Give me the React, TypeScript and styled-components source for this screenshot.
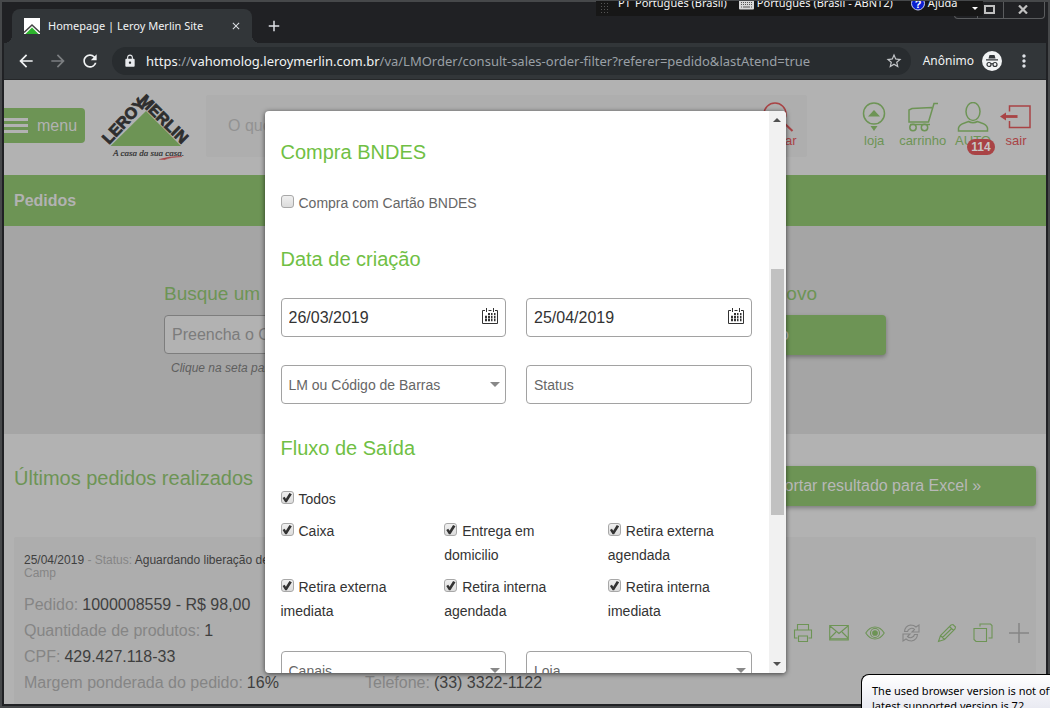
import React from "react";
import styled, { createGlobalStyle, css } from "styled-components";
import {
  MdArrowBack,
  MdArrowForward,
  MdRefresh,
  MdLock,
  MdStarBorder,
  MdMoreVert,
  MdClose,
  MdAdd,
} from "react-icons/md";

const green = "#6d9455";
const brightGreen = "#70bf44";
const red = "#a94345";
const pale = "#b2b2b2";
const ui = `"Noto Sans", "Open Sans", sans-serif`;
const sans = `"Liberation Sans", Arial, sans-serif`;

const GlobalStyle = createGlobalStyle`
  *, *::before, *::after { box-sizing: border-box; }
  html, body, #root { height: 100%; }
  body { margin: 0; overflow: hidden; font-family: ${sans}; }
  button, input, select { font: inherit; margin: 0; }
  button { border: 0; padding: 0; background: none; color: inherit; }
  h1, h2, h3, p, ul, dl, dd { margin: 0; padding: 0; font-weight: 400; }
`;

/* ---------- Browser window ---------- */

const Desktop = styled.div`
  position: relative;
  height: 100vh;
  overflow: hidden;
`;

const Window = styled.div`
  display: flex;
  flex-direction: column;
  height: 100%;
  overflow: hidden;
  background: #202124;
  border: 2px solid #46484a;
  padding: 0 2px 2px;
`;

const TabStrip = styled.div`
  display: flex;
  align-items: flex-end;
  height: 41px;
  padding-left: 8px;
  flex: none;
`;

const Tab = styled.div`
  position: relative;
  display: flex;
  align-items: center;
  gap: 8px;
  width: 240px;
  height: 34px;
  padding: 0 10px 0 12px;
  border-radius: 8px 8px 0 0;
  background: #323639;
  color: #f1f3f4;
  font: 11px/16px ${ui};
  &::before,
  &::after {
    content: "";
    position: absolute;
    bottom: 0;
    width: 8px;
    height: 8px;
  }
  &::before {
    right: 100%;
    background: radial-gradient(circle at 0 0, transparent 8px, #323639 8px);
  }
  &::after {
    left: 100%;
    background: radial-gradient(circle at 100% 0, transparent 8px, #323639 8px);
  }
`;

const TabTitle = styled.span`
  flex: 1;
  white-space: nowrap;
`;

const IconButton = styled.button<{ $color?: string }>`
  display: flex;
  align-items: center;
  justify-content: center;
  color: ${(p) => p.$color || "#dee1e6"};
`;

const NewTab = styled(IconButton)`
  width: 28px;
  height: 34px;
  margin-left: 8px;
`;

const WindowControls = styled.div`
  display: flex;
  align-self: flex-start;
  height: 17px;
  margin: 0 1px 0 auto;
  border: 1px solid #5a5c5e;
  border-top: 0;
  border-radius: 0 0 4px 4px;
`;

const Control = styled(IconButton)<{ $width: number }>`
  width: ${(p) => p.$width}px;
  padding: 0 2px 2px 0;
  color: #c0c0c0;
  & + & {
    border-left: 1px solid #5a5c5e;
  }
`;

const Toolbar = styled.div`
  display: flex;
  align-items: center;
  height: 37px;
  padding: 0 12px;
  flex: none;
  background: #323639;
  border-bottom: 1px solid #26282a;
`;

const NavButtons = styled.div`
  display: flex;
  gap: 12px;
  margin-right: 12px;
`;

const Omnibox = styled.div`
  display: flex;
  align-items: center;
  flex: 1;
  height: 28px;
  padding: 0 8px 0 11px;
  border-radius: 14px;
  background: #282c2f;
  color: #e8eaed;
`;

const Url = styled.span`
  flex: 1;
  margin-left: 9px;
  overflow: hidden;
  white-space: nowrap;
  color: #9aa0a6;
  font: 13px/20px ${ui};
  b {
    color: #f1f3f4;
    font-weight: 400;
  }
`;

const Profile = styled.div`
  display: flex;
  align-items: center;
  gap: 8px;
  margin: 0 12px;
  color: #f1f3f4;
  font: 12px/16px ${ui};
`;

const LanguageBar = styled.div`
  position: absolute;
  top: 1px;
  right: 67px;
  display: flex;
  align-items: flex-start;
  width: 387px;
  height: 15px;
  padding: 0 3px 0 22px;
  overflow: hidden;
  background: #171717;
  color: #f4f4f4;
  font: 11px/16px ${ui};
  white-space: nowrap;
`;

const BarLabel = styled.span<{ $width: number }>`
  width: ${(p) => p.$width}px;
  flex: none;
  margin-top: -6px;
`;

const Grip = styled.span`
  position: absolute;
  left: 4px;
  top: 1px;
  width: 8px;
  height: 11px;
  background: radial-gradient(#555 1px, transparent 1px) 0 0 / 3px 3px;
`;

const BrowserNotice = styled.div`
  position: absolute;
  right: 0;
  bottom: 0;
  width: 189px;
  height: 34px;
  padding: 8px 0 0 10px;
  overflow: hidden;
  border: 1px solid #000;
  border-width: 1px 0 0 1px;
  border-radius: 8px 0 0 0;
  background: linear-gradient(#fff, #e9eaf2);
  color: #000;
  font: 11px/15px ${ui};
  white-space: nowrap;
`;

/* ---------- Page ---------- */

const Viewport = styled.div`
  position: relative;
  flex: 1;
  min-height: 0;
  overflow: hidden;
  background: ${pale};
`;

const Header = styled.header`
  display: flex;
  align-items: center;
  height: 95px;
  padding: 0 14px 4px 0;
`;

const MenuButton = styled.button`
  display: flex;
  align-items: center;
  gap: 9px;
  width: 81px;
  height: 35px;
  border-radius: 0 4px 4px 0;
  background: ${green};
  color: ${pale};
  font-size: 16px;
  line-height: 24px;
`;

const Burger = styled.span`
  width: 24px;
  height: 15px;
  border: solid ${pale};
  border-width: 3px 0;
  background: linear-gradient(${pale}, ${pale}) center / 24px 3px no-repeat;
`;

const LogoLink = styled.a`
  display: block;
  width: 92px;
  height: 72px;
  margin: 0 14px 0 15px;
`;

const SearchForm = styled.form`
  display: flex;
  flex: 1;
  height: 62px;
  border-radius: 2px;
  background: #aeaeae;
`;

const SearchInput = styled.input`
  flex: 1;
  min-width: 0;
  border: 0;
  padding: 0 22px;
  background: none;
  font-size: 16px;
  &::placeholder {
    color: #929292;
    opacity: 1;
  }
`;

const NavItem = styled.button<{ $color: string }>`
  position: relative;
  display: flex;
  flex-direction: column;
  align-items: center;
  min-width: 32px;
  color: ${(p) => p.$color};
  font-size: 13px;
  line-height: 16px;
`;

const SearchButton = styled(NavItem)`
  width: 60px;
  padding-top: 7px;
`;

const HeaderNav = styled.nav`
  display: flex;
  gap: 9px;
  margin-left: 51px;
`;

const Badge = styled.span`
  position: absolute;
  right: -4px;
  bottom: -6px;
  width: 28px;
  border-radius: 8px;
  background: ${red};
  color: #c6c6c6;
  font-size: 12px;
  font-weight: 700;
  text-align: center;
`;

const TitleBar = styled.div`
  display: flex;
  align-items: center;
  height: 51px;
  padding: 0 10px;
  background: ${green};
`;

const PageTitle = styled.h1`
  color: ${pale};
  font-size: 16px;
  font-weight: 700;
  line-height: 24px;
`;

const Finder = styled.section`
  display: flex;
  justify-content: center;
  gap: 40px;
  height: 208px;
  padding-top: 56px;
  background: #a5a5a5;
`;

const FinderColumn = styled.div<{ $end?: boolean }>`
  width: 341px;
  ${(p) =>
    p.$end &&
    css`
      h2 {
        padding-right: 69px;
        text-align: right;
      }
    `}
`;

const FinderTitle = styled.h2`
  margin-bottom: 9px;
  color: ${green};
  font-size: 19px;
  line-height: 24px;
`;

const FinderInput = styled.input`
  width: 100%;
  height: 39px;
  padding: 0 7px;
  border: 1px solid #7d7d7d;
  border-radius: 4px;
  background: ${pale};
  font-size: 16px;
  &::placeholder {
    color: #7c7c7c;
    opacity: 1;
  }
`;

const Hint = styled.p`
  margin-top: 6px;
  padding-left: 7px;
  color: #5f5f5f;
  font-size: 12px;
  font-style: italic;
  line-height: 16px;
`;

const GreenButton = styled.button<{ $wide?: boolean }>`
  height: 40px;
  border-radius: 4px;
  background: ${green};
  box-shadow: 0 2px 4px rgba(0, 0, 0, 0.3);
  color: #b8b8b8;
  font-size: 16px;
  width: ${(p) => (p.$wide ? "334px" : "100%")};
  text-align: center;
  ${(p) =>
    !p.$wide &&
    css`
      padding-right: 97px;
      text-align: right;
    `}
`;

const Orders = styled.section`
  padding: 32px 10px 0;
`;

const OrdersHead = styled.div`
  display: flex;
  align-items: flex-start;
  justify-content: space-between;
  height: 71px;
`;

const OrdersTitle = styled.h2`
  color: ${green};
  font-size: 20px;
  line-height: 24px;
`;

const OrderCard = styled.article`
  height: 240px;
  padding: 17px 10px 0;
  border-radius: 2px;
  background: #adadad;
  color: #858585;
  b {
    color: #3f3f3f;
    font-weight: 400;
  }
`;

const OrderStatus = styled.p`
  height: 38px;
  font-size: 12px;
  line-height: 13px;
  span {
    display: block;
  }
`;

const OrderColumns = styled.div`
  display: flex;
  align-items: flex-start;
`;

const Details = styled.dl<{ $last?: boolean }>`
  width: 341px;
  font-size: 16px;
  line-height: 26px;
  ${(p) => p.$last && "align-self: flex-end;"}
  div {
    display: flex;
    gap: 4px;
  }
  dd {
    color: #3f3f3f;
  }
`;

const Actions = styled.div`
  display: flex;
  gap: 16px;
  margin: 31px -3px 0 auto;
`;

/* ---------- Dialog ---------- */

const Overlay = styled.div`
  position: absolute;
  inset: 0;
  display: flex;
  align-items: center;
  justify-content: center;
`;

const Dialog = styled.div`
  display: flex;
  width: 50%;
  height: 90%;
  overflow: hidden;
  border-radius: 4px;
  background: #fff;
  box-shadow: 0 1px 5px rgba(0, 0, 0, 0.65);
`;

const DialogBody = styled.form`
  flex: 1;
  min-width: 0;
  overflow: hidden;
  padding: 29px 17px 0 16px;
`;

const Group = styled.section`
  display: flex;
  flex-direction: column;
  margin-bottom: 32px;
`;

const GroupTitle = styled.h2`
  margin-bottom: 27px;
  color: ${brightGreen};
  font-size: 20px;
  line-height: 24px;
`;

const FieldGrid = styled.div`
  display: grid;
  grid-template-columns: 1fr 1fr;
  gap: 28px 20px;
`;

const Field = styled.div`
  display: flex;
  align-items: center;
  min-width: 0;
  height: 39px;
  border: 1px solid #a2a2a2;
  border-radius: 4px;
  background: #fff;
  color: #333;
  svg {
    flex: none;
  }
`;

const FieldInput = styled.input`
  flex: 1;
  min-width: 0;
  height: 37px;
  padding: 0 7px;
  border: 0;
  background: none;
  color: #333;
  font-size: 16px;
  &::placeholder {
    color: #666;
    font-size: 14px;
    opacity: 1;
  }
`;

const CalendarButton = styled(IconButton)`
  width: 18px;
  height: 37px;
  padding-bottom: 3px;
  margin-right: 6px;
  color: #333;
`;

const FieldSelect = styled.select`
  flex: 1;
  min-width: 0;
  height: 37px;
  padding: 0 7px;
  border: 0;
  appearance: none;
  background: none;
  color: #666;
  font-size: 14px;
`;

const Caret = styled.span`
  width: 0;
  margin-right: 5px;
  border: 5px solid transparent;
  border-top-color: #888;
  border-bottom: 0;
`;

const CheckGrid = styled.div`
  display: grid;
  grid-template-columns: repeat(3, 1fr);
  gap: 8px 20px;
  margin: 8px 0 28px;
`;

const CheckLabel = styled.label<{ $muted?: boolean }>`
  color: ${(p) => (p.$muted ? "#666" : "#333")};
  font-size: 14px;
  line-height: 24px;
`;

const CheckBox = styled.input`
  display: inline-block;
  width: 13px;
  height: 13px;
  && {
    margin-right: 5px;
  }
  border: 1px solid #a8a8a8;
  border-radius: 3px;
  appearance: none;
  vertical-align: baseline;
  background: linear-gradient(#f0f0f0, #dcdcdc);
  &:checked::before {
    content: "";
    display: block;
    width: 11px;
    height: 11px;
    background: #333;
    clip-path: polygon(10% 52%, 28% 42%, 40% 60%, 72% 8%, 94% 18%, 48% 92%, 34% 92%);
  }
`;

const Scrollbar = styled.div`
  display: grid;
  grid-template-rows: 17px 141fr 246fr 141fr 17px;
  width: 17px;
  background: #f1f1f1;
`;

const Thumb = styled.div`
  grid-row: 3;
  margin: 0 2px;
  background: #c1c1c1;
`;

const ScrollArrow = styled(IconButton)<{ $down?: boolean }>`
  grid-row: ${(p) => (p.$down ? 5 : 1)};
  color: #505050;
`;

/* ---------- Drawings ---------- */

const Stroke = ({ w, h, children, sw = 1.5 }: { w: number; h: number; sw?: number; children: React.ReactNode }) => (
  <svg width={w} height={h} viewBox={`0 0 ${w} ${h}`} fill="none" stroke="currentColor" strokeWidth={sw}>
    {children}
  </svg>
);

const Favicon = () => (
  <svg width="16" height="16" viewBox="0 0 16 16">
    <rect width="16" height="16" fill="#fff" />
    <path d="M1.500 16 8 9.500l6.500 6.500z" fill="#2db42d" />
    <path d="M0 14.500 8 7l8 7.500" fill="none" stroke="#444" strokeWidth="1.500" />
  </svg>
);

const Logo = () => (
  <svg width="92" height="72" viewBox="0 0 92 72" overflow="visible">
    <path d="M46 21 81 56H10.500z" fill={green} />
    <g fill="#2e2e2e" stroke="#2e2e2e" strokeWidth="0.800" fontFamily="Liberation Sans" fontWeight="700" fontSize="16">
      <text transform="translate(9 55) rotate(-47)">LEROY</text>
      <text transform="translate(38 11.500) rotate(44.500)">MERLIN</text>
    </g>
    <text x="13" y="66" fill="#2e2e2e" stroke="#2e2e2e" strokeWidth="0.200" fontFamily="Liberation Serif" fontStyle="italic" fontSize="9">
      A casa da sua casa.
    </text>
    <path d="M59 69.500q10-3.500 23-3-12 .6-18 3.200" fill={red} stroke={red} strokeWidth=".5" />
  </svg>
);

const SearchIcon = () => (
  <Stroke w={40} h={31}>
    <circle cx="18" cy="12" r="11" />
    <path d="M26 20l9.500 9" strokeWidth="2" />
  </Stroke>
);

const StoreIcon = () => (
  <Stroke w={24} h={31}>
    <circle cx="12" cy="11.500" r="10.500" />
    <path d="M6 14.500l6-6.500 6 6.500z" fill="currentColor" stroke="none" />
    <path d="M8.500 24h7l-3.500 5z" fill="currentColor" stroke="none" />
  </Stroke>
);

const CartIcon = () => (
  <Stroke w={32} h={31}>
    <path d="M31 1.500h-4l-5.500 18.500H2V8l3-1.500 20-1" />
    <path d="M3 22.500h20" />
    <circle cx="6" cy="25.500" r="3.200" />
    <circle cx="17.500" cy="25.500" r="3.200" />
  </Stroke>
);

const UserIcon = () => (
  <Stroke w={32} h={31}>
    <ellipse cx="16" cy="9.500" rx="7" ry="9" />
    <path d="M1.500 29v-3q1-3.500 6-5l4-1.500q4.500 2.500 9 0l4 1.500q5 1.500 6 5v3z" />
  </Stroke>
);

const ExitIcon = () => (
  <Stroke w={32} h={31}>
    <path d="M9.500 9.500V4h20.500v21.500H9.500V19" />
    <path d="M4 14.500h13.500" strokeWidth="2.800" />
    <path d="M0 14.500l6-4v8z" fill="currentColor" stroke="none" />
  </Stroke>
);

const CalendarIcon = () => (
  <Stroke w={16} h={16} sw={1}>
    <path d="M3 2.500H.5v13h15v-13H13M6.500 2.500h3" />
    <path d="M4.500 0v4M11.500 0v4" />
    <path d="M6 6h2M9 6h1.500M12 6h1.500" strokeWidth="2" />
    <path d="M3 9h2M6 9h2M9 9h1.500M12 9h1.500M3 12h2M6 12h2M9 12h1.500M12 12h1.500" strokeWidth="2.400" />
  </Stroke>
);

const Triangle = ({ down }: { down?: boolean }) => (
  <svg width="8" height="4" viewBox="0 0 8 4" fill="currentColor">
    <path d={down ? "M0 0h8L4 4z" : "M0 4h8L4 0z"} />
  </svg>
);

const Incognito = () => (
  <svg width="20" height="20" viewBox="0 0 20 20">
    <circle cx="10" cy="10" r="10" fill="#f1f3f4" />
    <path d="M6.500 7.500 7.500 4h5l1 3.500zM4 8.200h12v1.300H4z" fill="#323639" />
    <g fill="none" stroke="#323639" strokeWidth="1.200">
      <circle cx="7" cy="13.500" r="2" />
      <circle cx="13" cy="13.500" r="2" />
      <path d="M9 13q1-.8 2 0" />
    </g>
  </svg>
);

const Keyboard = () => (
  <svg width="15" height="9" viewBox="0 1 15 9">
    <rect width="15" height="9" y="0.500" rx="1" fill="#d8d8d8" />
    <path d="M2 2.500h11M2 4.500h11" stroke="#555" strokeDasharray="1 1" />
    <path d="M2 7h1M4 7h7M12 7h1" stroke="#555" />
  </svg>
);

const HelpIcon = () => (
  <svg width="14" height="10" viewBox="0 4 14 10">
    <circle cx="7" cy="6.500" r="6.500" fill="#0a1fd0" stroke="#c8ccf0" />
    <text x="7" y="10.500" textAnchor="middle" fill="#fff" fontFamily="Liberation Sans" fontWeight="700" fontSize="11">
      ?
    </text>
  </svg>
);

const actionIcons: { label: string; color: string; icon: React.ReactNode }[] = [
  {
    label: "Imprimir",
    color: green,
    icon: <path d="M4.500 7V1.500h11V7M4.500 15h-3V7h17v8h-3M5.500 13h9v5.500h-9zM3 7h14" />,
  },
  {
    label: "Enviar e-mail",
    color: green,
    icon: <path d="M.7 2.500h18.600v14.500H.7zM.7 15.800h18.600M1 3l9 7.500L19 3M1 15l6-6M19 15l-6-6" />,
  },
  {
    label: "Visualizar",
    color: green,
    icon: (
      <>
        <path d="M.8 10q3.700-6 9.200-6t9.200 6q-3.700 6-9.200 6T.8 10z" />
        <circle cx="10" cy="10" r="4.500" />
        <circle cx="10" cy="10" r="2.300" fill="currentColor" />
      </>
    ),
  },
  {
    label: "Atualizar",
    color: "#858585",
    icon: (
      <>
        <path d="M3.500 8.500q.5-5.500 6-6.500 3.500 0 5.500 2L18 2v7h-7l2.500-2.500q-2-2-4.500-.8Q7 6.500 6.500 8.500z" />
        <path d="M16.500 11.500q-.5 5.500-6 6.500-3.500 0-5.500-2L2 18v-7h7l-2.500 2.500q2 2 4.500.8 2-.8 2.500-2.800z" />
      </>
    ),
  },
  {
    label: "Editar",
    color: green,
    icon: <path d="M1.500 18.500l2-6L14 2l2-.5 2.500 2.500-.5 2L7.500 16.500zM3.500 12.500l4 4M12.500 3.500l4 4M5.500 14.500l9.200-9" />,
  },
  {
    label: "Copiar",
    color: green,
    icon: <path d="M1 5.500h12.500V18.500H3l-2-2zM7 3.500V1h10.500l1.500 1.500V15h-3.500" />,
  },
];

/* ---------- Dialog content ---------- */

const DateField = ({ label, value }: { label: string; value: string }) => (
  <Field>
    <FieldInput type="text" aria-label={label} defaultValue={value} />
    <CalendarButton type="button" aria-label={`Abrir calendário: ${label}`}>
      <CalendarIcon />
    </CalendarButton>
  </Field>
);

const SelectField = ({ label }: { label: string }) => (
  <Field>
    <FieldSelect aria-label={label} defaultValue="">
      <option value="">{label}</option>
    </FieldSelect>
    <Caret />
  </Field>
);

const Check = ({ text, checked, muted }: { text: string; checked?: boolean; muted?: boolean }) => (
  <CheckLabel $muted={muted}>
    <CheckBox type="checkbox" defaultChecked={checked} />
    {text}
  </CheckLabel>
);

const exits = [
  "Caixa",
  "Entrega em domicilio",
  "Retira externa agendada",
  "Retira externa imediata",
  "Retira interna agendada",
  "Retira interna imediata",
];

const FilterDialog = () => (
  <Overlay>
    <Dialog role="dialog" aria-label="Filtro de pedidos">
      <DialogBody>
        <Group>
          <GroupTitle>Compra BNDES</GroupTitle>
          <Check text="Compra com Cartão BNDES" muted />
        </Group>
        <Group>
          <GroupTitle>Data de criação</GroupTitle>
          <FieldGrid>
            <DateField label="Data inicial" value="26/03/2019" />
            <DateField label="Data final" value="25/04/2019" />
            <SelectField label="LM ou Código de Barras" />
            <Field>
              <FieldInput type="text" aria-label="Status" placeholder="Status" />
            </Field>
          </FieldGrid>
        </Group>
        <Group>
          <GroupTitle>Fluxo de Saída</GroupTitle>
          <Check text="Todos" checked />
          <CheckGrid>
            {exits.map((text) => (
              <Check key={text} text={text} checked />
            ))}
          </CheckGrid>
          <FieldGrid>
            <SelectField label="Canais" />
            <SelectField label="Loja" />
          </FieldGrid>
        </Group>
      </DialogBody>
      <Scrollbar>
        <ScrollArrow type="button" aria-label="Rolar para cima">
          <Triangle />
        </ScrollArrow>
        <Thumb />
        <ScrollArrow type="button" aria-label="Rolar para baixo" $down>
          <Triangle down />
        </ScrollArrow>
      </Scrollbar>
    </Dialog>
  </Overlay>
);

/* ---------- Page content ---------- */

const orderDetails: [string, string][] = [
  ["Pedido:", "1000008559 - R$ 98,00"],
  ["Quantidade de produtos:", "1"],
  ["CPF:", "429.427.118-33"],
  ["Margem ponderada do pedido:", "16%"],
];

const SitePage = () => (
  <>
    <Header>
      <MenuButton type="button">
        <Burger />
        menu
      </MenuButton>
      <LogoLink href="#" aria-label="Leroy Merlin">
        <Logo />
      </LogoLink>
      <SearchForm>
        <SearchInput type="search" aria-label="Buscar produtos" placeholder="O que você procura?" />
        <SearchButton type="button" $color={red}>
          <SearchIcon />
          buscar
        </SearchButton>
      </SearchForm>
      <HeaderNav>
        <NavItem type="button" $color={green}>
          <StoreIcon />
          loja
        </NavItem>
        <NavItem type="button" $color={green}>
          <CartIcon />
          carrinho
        </NavItem>
        <NavItem type="button" $color={green}>
          <UserIcon />
          AUTO
          <Badge>114</Badge>
        </NavItem>
        <NavItem type="button" $color={red}>
          <ExitIcon />
          sair
        </NavItem>
      </HeaderNav>
    </Header>
    <TitleBar>
      <PageTitle>Pedidos</PageTitle>
    </TitleBar>
    <Finder>
      <FinderColumn>
        <FinderTitle>Busque um pedido</FinderTitle>
        <FinderInput type="text" aria-label="Busque um pedido" placeholder="Preencha o CPF" />
        <Hint>Clique na seta para filtrar</Hint>
      </FinderColumn>
      <FinderColumn $end>
        <FinderTitle>Crie um novo</FinderTitle>
        <GreenButton type="button">Criar pedido</GreenButton>
      </FinderColumn>
    </Finder>
    <Orders>
      <OrdersHead>
        <OrdersTitle>Últimos pedidos realizados</OrdersTitle>
        <GreenButton type="button" $wide>
          Exportar resultado para Excel »
        </GreenButton>
      </OrdersHead>
      <OrderCard>
        <OrderStatus>
          <span>
            <b>25/04/2019</b> - Status: <b>Aguardando liberação de pagamento</b>
          </span>
          <span>Camp</span>
        </OrderStatus>
        <OrderColumns>
          <Details>
            {orderDetails.map(([term, value]) => (
              <div key={term}>
                <dt>{term}</dt>
                <dd>{value}</dd>
              </div>
            ))}
          </Details>
          <Details $last>
            <div>
              <dt>Telefone:</dt>
              <dd>(33) 3322-1122</dd>
            </div>
          </Details>
          <Actions>
            {actionIcons.map(({ label, color, icon }) => (
              <IconButton key={label} type="button" aria-label={label} $color={color}>
                <Stroke w={20} h={20} sw={1.1}>
                  {icon}
                </Stroke>
              </IconButton>
            ))}
            <IconButton type="button" aria-label="Mais opções" $color="#858585">
              <Stroke w={20} h={20}>
                <path d="M0 10h20M10 0v20" />
              </Stroke>
            </IconButton>
          </Actions>
        </OrderColumns>
      </OrderCard>
    </Orders>
  </>
);

export default function App() {
  return (
    <Desktop>
      <GlobalStyle />
      <Window>
        <TabStrip>
          <Tab>
            <Favicon />
            <TabTitle>Homepage | Leroy Merlin Site</TabTitle>
            <IconButton type="button" aria-label="Fechar guia">
              <MdClose size={12} />
            </IconButton>
          </Tab>
          <NewTab type="button" aria-label="Nova guia">
            <MdAdd size={18} />
          </NewTab>
          <WindowControls>
            <Control type="button" aria-label="Minimizar" $width={22} />
            <Control type="button" aria-label="Restaurar" $width={26}>
              <svg width="11" height="9" fill="none" stroke="currentColor" strokeWidth="2">
                <path d="M1 1h9v7H1z" />
              </svg>
            </Control>
            <Control type="button" aria-label="Fechar" $width={41}>
              <svg width="10" height="9" stroke="currentColor" strokeWidth="2.200">
                <path d="M1 .5l8 8M9 .5l-8 8" />
              </svg>
            </Control>
          </WindowControls>
        </TabStrip>
        <Toolbar>
          <NavButtons>
            <IconButton type="button" aria-label="Voltar" $color="#f1f3f4">
              <MdArrowBack size={20} />
            </IconButton>
            <IconButton type="button" aria-label="Avançar" $color="#7b7e81">
              <MdArrowForward size={20} />
            </IconButton>
            <IconButton type="button" aria-label="Recarregar" $color="#f1f3f4">
              <MdRefresh size={20} />
            </IconButton>
          </NavButtons>
          <Omnibox>
            <MdLock size={14} />
            <Url>
              <b>https</b>://<b>vahomolog.leroymerlin.com.br</b>
              /va/LMOrder/consult-sales-order-filter?referer=pedido&amp;lastAtend=true
            </Url>
            <IconButton type="button" aria-label="Adicionar aos favoritos" $color="#c4c7ca">
              <MdStarBorder size={18} />
            </IconButton>
          </Omnibox>
          <Profile>
            Anônimo
            <Incognito />
          </Profile>
          <IconButton type="button" aria-label="Menu do navegador">
            <MdMoreVert size={20} />
          </IconButton>
        </Toolbar>
        <Viewport>
          <SitePage />
          <FilterDialog />
        </Viewport>
      </Window>
      <LanguageBar>
        <Grip />
        <BarLabel $width={17}>PT</BarLabel>
        <BarLabel $width={104}>Português (Brasil)</BarLabel>
        <Keyboard />
        <BarLabel $width={157}>&nbsp;Português (Brasil - ABNT2)</BarLabel>
        <HelpIcon />
        <BarLabel $width={46}>&nbsp;Ajuda</BarLabel>
        <svg width="8" height="12" fill="#fff">
          <path d="M1 6h6L4 9z" />
        </svg>
      </LanguageBar>
      <BrowserNotice>
        The used browser version is not officially supported.
        <br />
        latest supported version is 72.
      </BrowserNotice>
    </Desktop>
  );
}
